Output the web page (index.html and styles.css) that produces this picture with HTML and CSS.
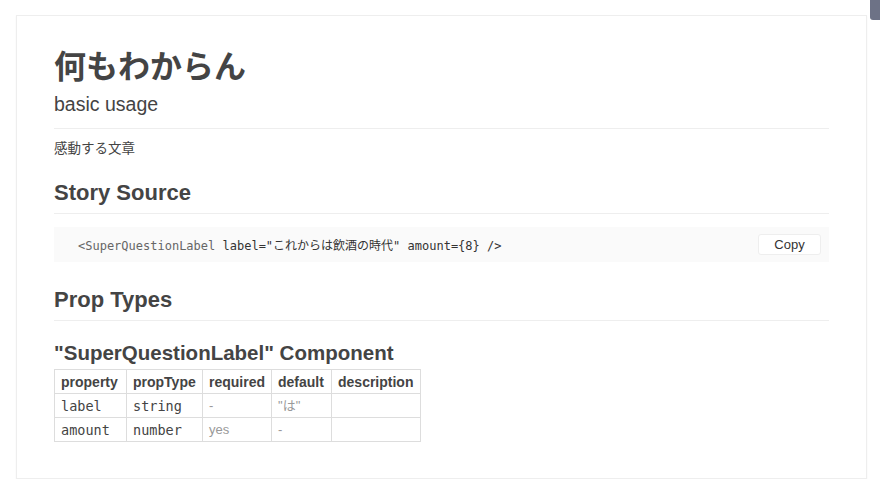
FILE: index.html
```html
<!DOCTYPE html>
<html lang="ja">
<head>
<meta charset="utf-8">
<title>何もわからん</title>
<link rel="stylesheet" href="styles.css">
</head>
<body>
<div class="scroll-thumb"></div>
<div class="info">
  <header class="info-header">
    <h1 class="title">何もわからん</h1>
    <h2 class="subtitle">basic usage</h2>
  </header>
  <p class="desc">感動する文章</p>
  <h3 class="section">Story Source</h3>
  <div class="source">
    <code class="code"><span class="tag">&lt;SuperQuestionLabel</span> label="これからは飲酒の時代" amount={8} /&gt;</code>
    <button class="copy">Copy</button>
  </div>
  <h3 class="section">Prop Types</h3>
  <h4 class="component">"SuperQuestionLabel" Component</h4>
  <table class="props">
    <thead>
      <tr><th class="c1">property</th><th class="c2">propType</th><th class="c3">required</th><th class="c4">default</th><th class="c5">description</th></tr>
    </thead>
    <tbody>
      <tr><td class="mono">label</td><td class="mono">string</td><td class="muted">-</td><td class="muted">"は"</td><td></td></tr>
      <tr><td class="mono">amount</td><td class="mono">number</td><td class="muted">yes</td><td class="muted">-</td><td></td></tr>
    </tbody>
  </table>
</div>
</body>
</html>
```

FILE: styles.css
```css
html, body {
  margin: 0;
  padding: 0;
  background: #fff;
}

body {
  font-family: "Liberation Sans", "Noto Sans CJK JP", sans-serif;
  color: #444;
  position: relative;
}

.scroll-thumb {
  position: absolute;
  top: 0;
  right: 0;
  width: 10px;
  height: 20px;
  background: #6d7286;
  border-radius: 0 0 0 3px;
}

.info {
  margin: 15px 13px 0 16px;
  border: 1px solid #eee;
  box-shadow: 0 1px 2px rgba(0, 0, 0, 0.04);
  padding: 29px 37px 36px 37px;
  background: #fff;
}

.info-header {
  border-bottom: 1px solid #eee;
  margin-bottom: 10px;
}

.title {
  margin: 0;
  font-family: "Noto Sans CJK JP", sans-serif;
  font-size: 32px;
  line-height: 38px;
  font-weight: 700;
  color: #444;
}

.subtitle {
  margin: 9px 0 12px;
  font-size: 19.5px;
  line-height: 24px;
  font-weight: 400;
  color: #444;
}

.desc {
  margin: 0 0 20px;
  font-size: 13.5px;
  line-height: 20px;
  color: #444;
}

.section {
  margin: 0;
  padding-bottom: 6px;
  border-bottom: 1px solid #eee;
  font-size: 22px;
  line-height: 28px;
  font-weight: 700;
  color: #444;
}

.source {
  margin: 13px 0 24px;
  background: #fafafa;
  height: 35px;
  display: flex;
  align-items: center;
  justify-content: space-between;
  padding: 0 8px 0 24px;
}

.code {
  font-family: "DejaVu Sans Mono", "Noto Sans CJK JP", monospace;
  font-size: 12px;
  color: #333;
}

.code .tag {
  color: #666;
}

.copy {
  font-family: "Liberation Sans", sans-serif;
  font-size: 13px;
  color: #333;
  background: #fff;
  border: 1px solid #eee;
  border-radius: 3px;
  width: 63px;
  height: 21px;
  padding: 0;
}

.component {
  margin: 20px 0 4px;
  font-size: 20.5px;
  line-height: 24px;
  font-weight: 700;
  color: #444;
}

.props {
  border-collapse: collapse;
  table-layout: fixed;
  font-size: 14px;
  color: #444;
}

.props th,
.props td {
  border: 1px solid #ddd;
  height: 23px;
  padding: 0 6px;
  text-align: left;
  line-height: 18px;
  white-space: nowrap;
}

.props th {
  font-weight: 700;
}

.props .c1 { width: 59px; }
.props .c2 { width: 63px; }
.props .c3 { width: 56px; }
.props .c4 { width: 47px; }
.props .c5 { width: 76px; }

.props .mono {
  font-family: "DejaVu Sans Mono", monospace;
  font-size: 13.5px;
}

.props .muted {
  color: #999;
  font-size: 13px;
}
```
